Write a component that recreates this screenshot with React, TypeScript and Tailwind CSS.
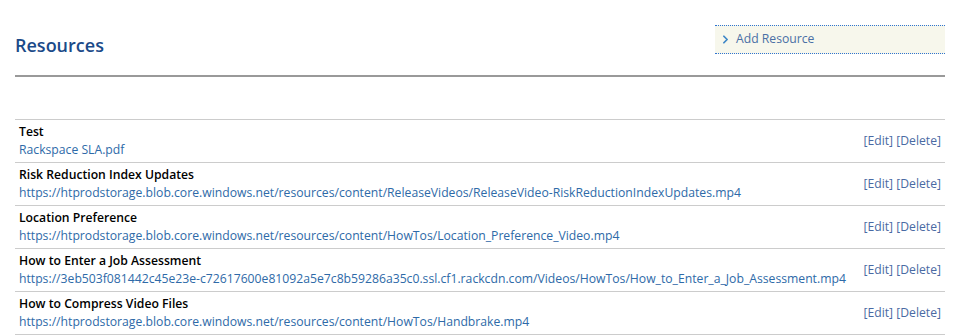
import { ChevronRight } from "lucide-react";

type Resource = {
  title: string;
  url: string;
};

const resources: Resource[] = [
  { title: "Test", url: "Rackspace SLA.pdf" },
  {
    title: "Risk Reduction Index Updates",
    url: "https://htprodstorage.blob.core.windows.net/resources/content/ReleaseVideos/ReleaseVideo-RiskReductionIndexUpdates.mp4",
  },
  {
    title: "Location Preference",
    url: "https://htprodstorage.blob.core.windows.net/resources/content/HowTos/Location_Preference_Video.mp4",
  },
  {
    title: "How to Enter a Job Assessment",
    url: "https://3eb503f081442c45e23e-c72617600e81092a5e7c8b59286a35c0.ssl.cf1.rackcdn.com/Videos/HowTos/How_to_Enter_a_Job_Assessment.mp4",
  },
  {
    title: "How to Compress Video Files",
    url: "https://htprodstorage.blob.core.windows.net/resources/content/HowTos/Handbrake.mp4",
  },
];

function App() {
  return (
    <div className="min-h-screen bg-white pl-[15px] pr-[22px] pt-[25px] font-['Open_Sans',sans-serif] text-[12.2px]">
      <header className="flex items-start justify-between border-b-2 border-[#999999] pb-[17px]">
        <h1 className="pt-[8px] text-[18px] leading-[25px] font-semibold text-[#1b4a89]">Resources</h1>
        <a
          href="#"
          className="flex h-[29px] w-[230px] items-center gap-[4px] border-y border-dotted border-[#2f74d0] bg-[#f7f7ec] pl-[4px] text-[12.2px] text-[#4a6fa5]"
        >
          <ChevronRight className="h-[13px] w-[13px] text-[#3d86c6]" strokeWidth={3.2} />
          Add Resource
        </a>
      </header>

      <table className="mt-[42px] w-full border-collapse">
        <tbody>
          {resources.map((r) => (
            <tr key={r.title} className="h-[43px] border-y border-[#cccccc]">
              <td className="px-[4px] py-[3px] leading-[18px]">
                <div className="font-semibold text-black">{r.title}</div>
                <a href="#" className="text-[#2e6aa8]">
                  {r.url}
                </a>
              </td>
              <td className="px-[4px] text-right align-middle whitespace-nowrap text-[#4a6aa3]">
                <a href="#">[Edit]</a> <a href="#">[Delete]</a>
              </td>
            </tr>
          ))}
        </tbody>
      </table>
    </div>
  );
}

export default App;
